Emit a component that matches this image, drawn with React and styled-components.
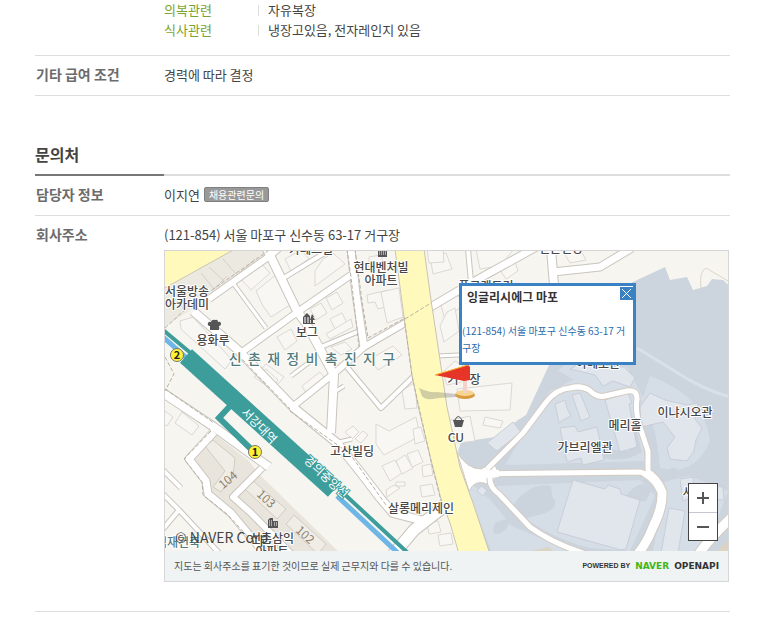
import styled, { createGlobalStyle } from 'styled-components';

const GlobalStyle = createGlobalStyle`
  body {
    margin: 0;
    background: #fff;
    color: #444;
    font-family: "Noto Sans CJK KR", "Liberation Sans", sans-serif;
    font-size: 13px;
  }
`;

const Page = styled.main`
  padding: 0 42px 24px 35px;
`;

const Conditions = styled.dl`
  margin: 0;
  padding: 0 0 15px 129px;
  border-bottom: 1px solid #ddd;
`;

const Condition = styled.div`
  display: flex;
  align-items: center;
  line-height: 20px;
`;

const ConditionName = styled.dt`
  width: 94px;
  color: #7ba32f;
`;

const ConditionValue = styled.dd`
  display: flex;
  align-items: center;
  gap: 9px;
  margin: 0;

  &::before {
    content: "";
    width: 1px;
    height: 11px;
    background: #ddd;
  }
`;

const Rows = styled.dl`
  margin: 0;
`;

const Row = styled.div`
  display: grid;
  grid-template-columns: 129px 1fr;
  padding: 4px 0 ${({ $bottom = 6 }) => $bottom}px;
  line-height: 29px;
  border-bottom: 1px solid #ddd;
`;

const RowLabel = styled.dt`
  padding-left: 1px;
  color: #6c6c6c;
  font-size: 14px;
  font-weight: 700;
`;

const RowValue = styled.dd`
  margin: 0;
  min-width: 0;
`;

const SectionHead = styled.header`
  display: flex;
  margin-top: 46px;
  border-bottom: 2px solid #ddd;
`;

const SectionTitle = styled.h2`
  width: 129px;
  margin: 0 0 -2px;
  padding-bottom: 8px;
  border-bottom: 2px solid #777;
  color: #444;
  font-size: 16px;
  font-weight: 700;
  line-height: 24px;
`;

const Person = styled.div`
  display: flex;
  align-items: center;
  gap: 4px;
`;

const Badge = styled.span`
  padding: 0 4px;
  border: 1px solid #808080;
  border-radius: 2px;
  background: #999;
  color: #fff;
  font-size: 10px;
  line-height: 13px;
`;

const MapCard = styled.div`
  margin: 1px 1px 0 0;
  border: 1px solid #d6d6d6;
  background: #eff3f4;
`;

const MapView = styled.div`
  position: relative;
  height: 300px;
  overflow: hidden;
  background: #f7f5f0;
`;

const MapDrawing = styled.svg`
  display: block;
  width: 100%;
  height: 100%;
`;

const PlaceName = styled.text`
  fill: ${({ $color = '#484848' }) => $color};
  stroke: #fff;
  stroke-width: 2px;
  stroke-linejoin: round;
  paint-order: stroke;
  font-size: ${({ $size = 12 }) => $size}px;
  font-weight: 500;
  text-anchor: middle;
`;

const PlainName = styled.text`
  fill: ${({ $color }) => $color};
  font-size: ${({ $size = 12 }) => $size}px;
  text-anchor: middle;
`;

const InfoWindow = styled.section`
  position: absolute;
  top: 32px;
  left: 294px;
  box-sizing: border-box;
  width: 177px;
  height: 82px;
  border: 3px solid #3b82c4;
  background: #fff;
`;

const InfoHead = styled.div`
  display: flex;
  justify-content: space-between;
  align-items: flex-start;
  padding: 1px 0 0 5px;
`;

const InfoTitle = styled.h3`
  margin: 0;
  color: #333;
  font-size: 12px;
  font-weight: 700;
  line-height: 20px;
`;

const CloseButton = styled.button`
  width: 13px;
  height: 13px;
  padding: 0;
  border: none;
  background: #3b82c4;
  line-height: 0;
`;

const InfoAddress = styled.p`
  margin: 15px 0 0;
  color: #2b6cae;
  font-size: 10px;
  line-height: 17px;
  word-break: break-all;
`;

const Copyright = styled.small`
  position: absolute;
  left: 10px;
  bottom: 4px;
  color: #444;
  font-size: 14px;
  line-height: 20px;
`;

const ZoomControl = styled.div`
  position: absolute;
  right: 10px;
  bottom: 10px;
  display: flex;
  flex-direction: column;
  border: 1px solid #444;
  background: #fff;
`;

const ZoomButton = styled.button`
  width: 28px;
  height: 28px;
  padding: 0;
  border: none;
  background: #fff;
  line-height: 0;

  & + & {
    border-top: 1px solid #c5c8d2;
  }
`;

const MapFooter = styled.footer`
  display: flex;
  justify-content: space-between;
  align-items: center;
  height: 30px;
  padding: 0 9px;
  color: #555;
  font-size: 10px;
  line-height: 30px;
`;

const Powered = styled.span`
  display: flex;
  align-items: center;
  gap: 5px;
  color: #333;
  font-family: "DejaVu Sans", sans-serif;
  font-size: 9px;
  font-weight: 700;
`;

const PoweredBy = styled.span`
  font-family: "Liberation Sans", sans-serif;
  font-size: 7px;
`;

const Naver = styled.span`
  color: #3fb618;
`;

const ROADS = [
  { d: 'M44 48 L106 4 L114 -3', w: 6 },
  { d: 'M102 -2 L132 60 L141 72 L169 124 L166 182', w: 8 },
  { d: 'M77 101 L134 60 L186 24', w: 6 },
  { d: 'M186 -2 L191 43 L199 96', w: 7 },
  { d: 'M240 72 L199 96 L172 120 L126 157', w: 6 },
  { d: 'M264 57 L308 31 L375 -6', w: 7 },
  { d: 'M303 -2 L306 31', w: 4 },
  { d: 'M386 -2 L389 34', w: 8 },
  { d: 'M388 21 L435 16 L467 -3', w: 7 },
  { d: 'M28 60 L73 99 L129 157 L172 192 L196 222 L216 248 L228 262 L259 270', w: 8 },
  { d: 'M276 258 L249 279 L228 304', w: 11 },
  { d: 'M68 32 L101 77', w: 3 },
  { d: 'M117 28 L166 -2', w: 4 },
  { d: 'M192 81 L156 96', w: 4 },
  { d: 'M126 125 L150 107', w: 3 },
  { d: 'M182 116 L216 157 L249 125', w: 4 },
  { d: 'M166 143 L179 135', w: 3 },
  { d: 'M170 192 L187 188', w: 3 },
  { d: 'M271 105 L294 104', w: 3 },
  { d: 'M-2 142 L49 176 L104 216', w: 8 },
  { d: 'M49 181 L24 208 L41 230 L43 243 L66 262 L100 303', w: 7 },
  { d: 'M97 217 L68 246 L86 262 L126 303', w: 6 },
  { d: 'M-2 219 L16 237', w: 4 },
  { d: 'M-2 243 L14 259 L55 303', w: 4 },
  { d: 'M14 259 L-2 278', w: 4 },
];

const CAMPUS_ROADS = [
  { d: 'M312 223 L475 221 Q490 225 497 240', w: 5 },
  { d: 'M480 221 Q492 228 497 241 Q498 256 488 276 Q482 292 472 304', w: 9 },
  { d: 'M322 218 L358 182 L382 150 Q392 138 405 137 Q416 134 424 139 Q432 147 440 145 L462 140 Q472 138 472 148 Q470 160 475 176 L483 200 L483 219', w: 5 },
  { d: 'M325 226 Q324 236 334 243 L365 276 Q388 293 424 304', w: 5 },
  { d: 'M533 304 Q544 288 567 266', w: 9 },
];

const HOUSES = [
  'M76 28 L95 11 L105 22 L86 39 Z',
  'M91 40 L112 23 L128 52 L106 66 L98 55 Z',
  'M15 70 L28 66 L67 109 L60 118 L16 78 Z',
  'M120 8 L136 -1 L144 8 L126 20 Z',
  'M150 20 L158 8 L168 2 L180 13 L150 35 Z',
  'M145 58 L156 52 L162 62 L151 69 Z',
  'M161 47 L172 41 L178 52 L167 59 Z',
  'M165 68 L177 62 L182 72 L170 78 Z',
  'M161 83 L186 68 L188 76 L165 88 Z',
  'M202 44 L223 39 L225 55 L213 58 L210 51 L203 52 Z',
  'M216 41 L234 37 L238 66 L222 72 Z',
  'M204 6 L216 4 L219 14 L204 17 Z',
  'M265 5 L281 2 L287 18 L268 23 Z',
  'M262 -2 L278 -2 L279 11 L264 12 Z',
  'M101 113 L119 126 L112 134 L94 121 Z',
  'M89 126 L101 118 L113 129 L106 138 Z',
  'M112 86 L126 78 L132 90 L120 99 Z',
  'M137 135 L155 121 L162 130 L143 145 Z',
  'M166 96 L180 91 L187 98 L176 104 Z',
  'M205 108 L228 95 L237 104 L213 119 Z',
  'M237 140 L250 131 L252 157 L240 158 Z',
  'M211 173 L224 180 L251 166 L255 185 L219 204 L211 193 Z',
  'M180 181 L188 175 L194 181 L187 188 Z',
  'M190 188 L198 180 L203 184 L196 192 Z',
  'M217 215 L230 209 L237 222 L225 230 Z',
  'M231 210 L240 204 L248 217 L237 223 Z',
  'M242 203 L253 199 L258 211 L247 216 Z',
  'M221 239 L229 234 L235 237 L222 246 Z',
  'M231 231 L240 231 L240 235 L231 235 Z',
  'M248 178 L256 176 L260 190 L250 193 Z',
  'M257 215 L266 213 L268 224 L258 226 Z',
  'M255 235 L267 233 L270 244 L257 246 Z',
  'M262 272 L273 270 L276 281 L264 283 Z',
  'M273 284 L286 282 L288 293 L275 295 Z',
  'M10 172 L17 161 L34 175 L27 184 Z',
  'M0 160 L8 166 L2 175 L-2 172 Z',
  'M275 50 L290 39 L298 54 L280 69 Z',
  'M282 61 L290 57 L294 80 L279 91 L275 75 Z',
  'M278 121 L290 110 L300 116 L302 130 L282 134 Z',
  'M292 138 L347 132 L345 159 L295 160 Z',
  'M282 170 L305 165 L310 190 L292 192 Z',
  'M320 166 L338 170 L335 177 L318 174 Z',
  'M311 -2 L349 -2 L335 15 L315 18 Z',
  'M335 19 L350 11 L353 20 L341 28 Z',
  'M398 0 L415 -2 L421 9 L405 12 Z',
];

const ESTATE_HOUSES = [
  'M80 238 L87 229 L121 258 L112 268 Z',
  'M121 273 L129 264 L161 293 L153 303 Z',
  'M40 195 L48 189 L70 207 L68 225 L56 241 L48 236 L60 220 Z',
];

const CAMPUS_SHADES = [
  'M385 140 L410 128 L430 138 L470 134 L480 210 L340 214 Z',
  'M393 120 Q415 95 462 116 L480 150 L430 140 Z',
  'M330 235 L475 229 L490 245 L465 300 L425 297 Q360 280 330 235 Z',
  'M485 125 Q540 145 545 190 Q530 226 495 217 Q490 160 475 155 Z',
  'M300 230 Q322 240 345 274 L405 300 L326 300 Z',
  'M500 230 L524 225 L563 240 L548 280 L530 300 L488 300 Z',
];

const CAMPUS_DARK_SHADES = [
  'M455 161 Q466 155 470 174 L477 201 Q460 212 438 207 L439 198 L464 200 Z',
  'M350 270 Q340 256 361 241 Q372 232 386 235 L387 245 Q397 256 377 263 Z',
  'M459 247 Q476 225 487 238 L481 250 L466 252 Z',
  'M330 272 Q350 263 341 278 Q331 287 328 280 Z',
  'M499 222 Q515 210 510 225 L502 231 Z',
];

const CAMPUS_HOUSES = [
  'M440 149 L463 142 L467 152 L464 153 L472 196 L455 201 Z',
  'M390 153 L400 149 L402 157 L406 165 L398 169 L394 172 Z',
  'M407 144 L415 142 L425 166 L416 170 Z',
  'M395 177 L410 175 L413 181 L432 176 L439 209 L418 214 L416 207 L402 211 Z',
  'M408 229 L440 238 L443 234 L455 238 L456 243 L475 249 L461 298 L456 299 L392 281 Z',
  'M475 156 L485 142 L500 149 L522 154 L533 152 L530 168 L537 177 L531 189 L529 200 L522 210 L505 208 L502 197 L510 186 L498 171 L476 176 Z',
  'M405 118 L414 113 L459 116 L470 127 L465 136 L448 130 L438 135 L430 124 Z',
  'M322 192 L348 171 L356 181 L332 200 Z',
  'M504 257 L520 260 L513 302 L496 302 Z',
  'M515 228 L528 226 L530 245 L518 250 Z',
  'M545 235 L558 236 L559 249 L546 248 Z',
  'M312 240 L316 235 L322 239 L318 245 Z',
];

const DASHES = [
  'M0 77 L24 55 L103 0',
  'M182 -2 L186 26 L194 96',
  'M190 -2 L197 50 L203 87 L240 67',
  'M240 68 L266 52',
  'M239 66 L247 125 L266 210 L276 250',
  'M73 104 L125 158',
  'M125 160 L160 185 L185 203 L221 254',
  'M0 138 L49 172',
  'M46 180 L19 208 L37 231 L38 244 L62 263 L96 300',
  'M0 106 L9 123 L0 140',
];

function Roads({ roads, edge }) {
  return (
    <g fill="none" strokeLinejoin="round">
      {roads.map(({ d, w }) => <path key={d} d={d} stroke={edge} strokeWidth={w + 2} />)}
      {roads.map(({ d, w }) => <path key={d} d={d} stroke="#fff" strokeWidth={w} />)}
    </g>
  );
}

function Shapes({ shapes, fill, stroke }) {
  return (
    <g fill={fill} stroke={stroke}>
      {shapes.map(d => <path key={d} d={d} />)}
    </g>
  );
}

function Exit({ x, y, number }) {
  return (
    <g>
      <circle cx={x} cy={y} r="6.5" fill="#fff133" stroke="#777" />
      <text x={x} y={y + 4} fontSize="11" fontWeight="700" textAnchor="middle" fill="#222">
        {number}
      </text>
    </g>
  );
}

function Tower({ x, y }) {
  return (
    <g transform={`translate(${x} ${y})`}>
      <path d="M0 2 L2 0 H5 V3 H10 V10 H0 Z" fill="#555" />
      <path d="M1 3h1M3 3h1M1 5h1M3 5h1M1 7h1M3 7h1M6 5h1M8 5h1M6 7h1M8 7h1" stroke="#fff" />
    </g>
  );
}

function StreetMap() {
  return (
    <MapDrawing role="img" aria-label="회사 위치 지도">
      <path d="M-2 -2 H106 L68 30 L0 76 Z" fill="#ece9e1" />
      <Shapes
        shapes={['M36 22 L49 38 L62 25', 'M44 16 L59 30', 'M58 8 L72 24 L90 8', 'M18 36 L32 50', 'M4 41 L18 57']}
        fill="none"
        stroke="#d5d1c9"
      />
      <path d="M-2 -2 H70 L-2 38 Z" fill="#fffabb" stroke="#cbc6b0" />
      <path d="M45 179 L84 210 L95 224 L176 303 H104 L70 262 L45 244 L40 229 L25 207 Z" fill="#e9e5dc" />
      <path d="M470 30 L500 16 L505 29 L522 26 L528 39 L542 35 L547 28 L558 29 L566 36 V302 H324 L293 200 L296 191 L330 186 L353 169 L361 164 L385 112 L440 45 Z" fill="#ccd4de" />
      <Shapes shapes={CAMPUS_SHADES} fill="#d5dde7" />
      <Shapes shapes={CAMPUS_DARK_SHADES} fill="#cbd3dd" />
      <path d="M472 97 L508 119 Q540 140 566 146" fill="none" stroke="#d8e0e8" strokeWidth="3" />
      <path d="M536 37 Q534 20 541 17 L563 30" fill="none" stroke="#dcd5ca" />
      <Shapes shapes={HOUSES} fill="#f8f7f4" stroke="#dcd9d3" />
      <Shapes shapes={ESTATE_HOUSES} fill="#f0ede6" stroke="#d2cdc3" />
      <Shapes shapes={CAMPUS_HOUSES} fill="#e1e6ed" stroke="#c9ced7" />
      <path d="M292 201 Q302 218 316 218 L328 212 L332 218 V226 L322 233 Q310 228 304 240 Z" fill="#fff" stroke="#d3cbc2" />
      <Roads roads={CAMPUS_ROADS} edge="#d3cbc2" />
      <path d="M300 219 L334 219 V226 L303 228 Z" fill="#fff" />
      <path d="M552 300 L563 289 V300 Z M366 300 L384 296 L388 300 Z" fill="#dcd3c3" />
      <Roads roads={ROADS} edge="#c9c5be" />
      <path
        d="M230 -2 L239 66 L247 124 L254 159 L266 209 L276 248 L285 272 L294 303 H325 L308 252 L295 216 L282 156 L271 82 L266 49 L259 -2 Z"
        fill="#fffabb"
        stroke="#c9c4b4"
      />
      <g fill="none" stroke="#b8b0a5" strokeDasharray="4 2">
        {DASHES.map(d => <path key={d} d={d} />)}
      </g>

      <g fill="none" stroke="#3c9d9b">
        <path d="M-2 86 L24 109 M172 245 L234 303" stroke="#6eb6e6" strokeWidth="5" />
        <path d="M-2 79 L28 104 M176 240 L244 303" strokeWidth="4" />
        <path d="M66 154 L54 167 L87 199" strokeWidth="6" />
        <path d="M21 105 L169 239" strokeWidth="18" />
      </g>
      <Exit x={12} y={104} number="2" />
      <Exit x={90} y={201} number="1" />
      <g transform="translate(94 175) rotate(45)">
        <PlainName y="4" $color="#fff">서강대역</PlainName>
      </g>
      <g transform="translate(161 226) rotate(43)">
        <PlainName y="4" $color="#fff" stroke="#3c9d9b" strokeWidth="2" paintOrder="stroke">경의중앙선</PlainName>
      </g>

      <g transform="translate(63 229) rotate(-40)"><PlainName y="4" $color="#8f826f">104</PlainName></g>
      <g transform="translate(101 248) rotate(42)"><PlainName y="4" $color="#8f826f">103</PlainName></g>
      <g transform="translate(140 284) rotate(42)"><PlainName y="4" $color="#8f826f">102</PlainName></g>

      <PlaceName x="22" y="45">서울방송</PlaceName>
      <PlaceName x="22" y="58">아카데미</PlaceName>
      <PlaceName x="146" y="3">카페스빌</PlaceName>
      <PlaceName x="216" y="21">현대벤처빌</PlaceName>
      <PlaceName x="216" y="34">아파트</PlaceName>
      <PlaceName x="48" y="94">용화루</PlaceName>
      <PlaceName x="142" y="86">보그</PlaceName>
      <PlaceName x="147" y="113" $size={14} $color="#547b7c">
        {'신촌재정비촉진지구'.split('').join('\u00a0\u00a0')}
      </PlaceName>
      <PlaceName x="187" y="205">고산빌딩</PlaceName>
      <PlaceName x="256" y="262">살롱메리제인</PlaceName>
      <PlaceName x="13" y="296" $color="#547b7c">역재건축</PlaceName>
      <PlaceName x="107" y="292">신촌삼익</PlaceName>
      <PlaceName x="107" y="305">아파트</PlaceName>
      <PlaceName x="291" y="191">CU</PlaceName>
      <PlaceName x="299" y="133">거구장</PlaceName>
      <PlaceName x="321" y="40">플클랜트리</PlaceName>
      <PlaceName x="396" y="2">인순면당</PlaceName>
      <PlaceName x="433" y="117">아베로관</PlaceName>
      <PlaceName x="460" y="179">메리홀</PlaceName>
      <PlaceName x="420" y="201">가브리엘관</PlaceName>
      <PlaceName x="520" y="166">이냐시오관</PlaceName>
      <PlaceName x="523" y="246">사</PlaceName>

      <path d="M45 79 V75 Q42 75 43 72 Q44 70 46 71 Q47 68 50 69 Q53 68 53 71 Q56 70 56 73 Q56 75 54 75 V79 Z" fill="#555" />
      <g transform="translate(138 62)" fill="#555">
        <path d="M0 4 L4 0 L7 3 V11 H0 Z M9 1 L11 4 H10 L12 7 H10 V10 H12 V11 H7 V10 H8 V7 H7 L8 4 Z" />
        <path d="M1 5h2M4 5h2M1 7h2M4 7h2M1 9h2M4 9h2" stroke="#fff" />
      </g>
      <g transform="translate(213 0)">
        <path d="M0 -3 H9 V6 H0 Z" fill="#555" />
        <path d="M1 1h1M3 1h1M5 1h1M7 1h1M1 3h1M3 3h1M5 3h1M7 3h1" stroke="#fff" />
      </g>
      <Tower x={103} y={267} />
      <path d="M288 169 H299 L297 176 H290 Z" fill="#555" />
      <path d="M290 169 Q293 162 297 169" fill="none" stroke="#555" />

      <path d="M254 137 Q264 142 272 141 L291 143 V146 L274 147 Q260 150 257 145 Z" fill="#777" opacity="0.35" />
      <ellipse cx="300" cy="144" rx="10" ry="4" fill="#d99b40" />
      <ellipse cx="300" cy="142" rx="9" ry="3" fill="#f8d48f" />
      <path d="M300 118 V142" stroke="#f1d3cc" strokeWidth="4" />
      <path d="M270 124 L303 114 L305 116 V129 L299 130 Z" fill="#e63428" />
      <path d="M270 124 L303 114" stroke="#f6a623" />
    </MapDrawing>
  );
}

function AddressMap() {
  return (
    <MapCard>
      <MapView>
        <StreetMap />
        <Copyright>© NAVER Corp.</Copyright>
        <InfoWindow>
          <InfoHead>
            <InfoTitle>잉글리시에그 마포</InfoTitle>
            <CloseButton type="button" aria-label="닫기">
              <svg width="13" height="13">
                <path d="M2 2 L11 11 M11 2 L2 11" stroke="#fff" />
              </svg>
            </CloseButton>
          </InfoHead>
          <InfoAddress>(121-854) 서울 마포구 신수동 63-17 거구장</InfoAddress>
        </InfoWindow>
        <ZoomControl>
          <ZoomButton type="button" aria-label="확대">
            <svg width="12" height="12"><path d="M0 6 H12 M6 0 V12" stroke="#555" strokeWidth="2" /></svg>
          </ZoomButton>
          <ZoomButton type="button" aria-label="축소">
            <svg width="12" height="12"><path d="M0 6 H12" stroke="#555" strokeWidth="2" /></svg>
          </ZoomButton>
        </ZoomControl>
      </MapView>
      <MapFooter>
        <span>지도는 회사주소를 표기한 것이므로 실제 근무지와 다를 수 있습니다.</span>
        <Powered>
          <PoweredBy>POWERED BY</PoweredBy>
          <Naver>NAVER</Naver>
          <span>OPENAPI</span>
        </Powered>
      </MapFooter>
    </MapCard>
  );
}

const CONDITIONS = [
  { name: '의복관련', value: '자유복장' },
  { name: '식사관련', value: '냉장고있음, 전자레인지 있음' },
];

export default function App() {
  return (
    <Page>
      <GlobalStyle />
      <Conditions>
        {CONDITIONS.map(({ name, value }) => (
          <Condition key={name}>
            <ConditionName>{name}</ConditionName>
            <ConditionValue>{value}</ConditionValue>
          </Condition>
        ))}
      </Conditions>
      <Rows>
        <Row>
          <RowLabel>기타 급여 조건</RowLabel>
          <RowValue>경력에 따라 결정</RowValue>
        </Row>
      </Rows>
      <SectionHead>
        <SectionTitle>문의처</SectionTitle>
      </SectionHead>
      <Rows>
        <Row>
          <RowLabel>담당자 정보</RowLabel>
          <RowValue>
            <Person>
              이지연
              <Badge>채용관련문의</Badge>
            </Person>
          </RowValue>
        </Row>
        <Row $bottom={29}>
          <RowLabel>회사주소</RowLabel>
          <RowValue>
            (121-854) 서울 마포구 신수동 63-17 거구장
            <AddressMap />
          </RowValue>
        </Row>
      </Rows>
    </Page>
  );
}
